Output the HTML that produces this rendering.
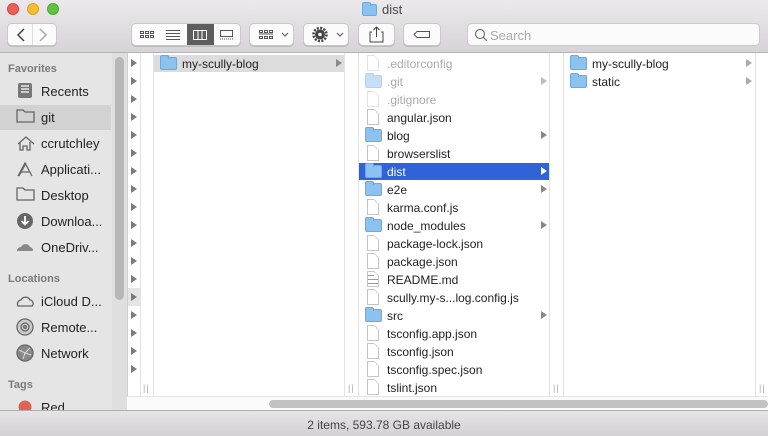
<!DOCTYPE html>
<html><head><meta charset="utf-8"><style>
*{margin:0;padding:0;box-sizing:border-box}
body{width:768px;height:436px;overflow:hidden;font-family:"Liberation Sans",sans-serif;font-size:12px;color:#222;background:#fff;position:relative}
.a{position:absolute}
.tb{left:0;top:0;width:768px;height:53px;background:linear-gradient(#ebe9eb,#d6d4d6);border-bottom:1px solid #b5b3b5}
.btn{position:absolute;top:23px;height:23px;background:#fbfbfb;border:1px solid #c9c7c9;border-radius:5px;box-shadow:0 1px 0 #bdbbbd}
.sb{left:0;top:53px;width:127px;height:358px;background:#e6e5e6}
.sl{position:absolute;left:8px;font-size:11px;color:#7b7a7b;font-weight:bold}
.si{position:absolute;left:41px;font-size:13px;color:#222}
.row{position:absolute;height:18px;line-height:18px;font-size:12px;margin-top:1px}
.fold{position:absolute;width:17px;height:13px;background:#8cc2ef;border:1px solid #6fa9da;border-radius:2px}
.fold:before{content:"";position:absolute;left:-1px;top:-3px;width:7px;height:3px;background:#8cc2ef;border:1px solid #6fa9da;border-bottom:none;border-radius:2px 2px 0 0}
.doc{position:absolute;width:12px;height:16px;border:1px solid #c4c4c4;background:#fff;border-top-right-radius:0}
.doc:after{content:"";position:absolute;right:-1px;top:-1px;width:5px;height:5px;background:linear-gradient(225deg,#fff 50%,#c4c4c4 50%,#c4c4c4 60%,#fff 60%)}
.arr{position:absolute;width:0;height:0;border-left:6px solid #888;border-top:4px solid transparent;border-bottom:4px solid transparent}
.ca{border-left-color:#7a7a7a}
.vl{position:absolute;top:53px;width:1px;height:343px;background:#e3e3e3}
.hd{position:absolute;top:383px;font-size:9px;color:#aaa;letter-spacing:1px}
</style></head><body>
<div class="a tb"></div>
<div class="a" style="left:7px;top:3px;width:12px;height:12px;border-radius:50%;background:#ec5f57;border:1px solid #d44"></div>
<div class="a" style="left:27px;top:3px;width:12px;height:12px;border-radius:50%;background:#f5bd2f;border:1px solid #d9a126"></div>
<div class="a" style="left:47px;top:3px;width:12px;height:12px;border-radius:50%;background:#5fc43f;border:1px solid #4aa830"></div>
<div class="fold" style="left:362px;top:4px;width:15px;height:12px"></div>
<div class="a" style="left:382px;top:2px;font-size:13px;color:#4a4a4a">dist</div>
<div class="btn" style="left:7px;width:50px"></div>
<div class="a" style="left:32px;top:24px;width:1px;height:21px;background:#ddd"></div>
<svg class="a" style="left:14px;top:27px" width="40" height="16"><path d="M10 2 L4 8 L10 14" stroke="#444" stroke-width="1.5" fill="none"/><path d="M26 2 L32 8 L26 14" stroke="#aaa" stroke-width="1.5" fill="none"/></svg>
<div class="btn" style="left:131px;width:110px;overflow:hidden"><div class="a" style="left:55px;top:0;width:27px;height:23px;background:#5d5d5d"></div></div>
<svg class="a" style="left:131px;top:23px" width="110" height="23">
<g fill="none" stroke="#555" stroke-width="1"><rect x="9.5" y="8.5" width="3" height="2"/><rect x="14.5" y="8.5" width="3" height="2"/><rect x="19.5" y="8.5" width="3" height="2"/><rect x="9.5" y="12.5" width="3" height="2"/><rect x="14.5" y="12.5" width="3" height="2"/><rect x="19.5" y="12.5" width="3" height="2"/>
<path d="M35 7.5h14M35 10.5h14M35 13.5h14M35 16.5h14"/>
<rect x="62.5" y="7.5" width="13" height="9" stroke="#fff"/><path d="M67 8v8M71 8v8" stroke="#fff"/>
<rect x="89.5" y="7.5" width="12" height="6"/><path d="M89 16h13" stroke-dasharray="1 1"/></g></svg>
<div class="btn" style="left:249px;width:45px"></div>
<svg class="a" style="left:249px;top:23px" width="45" height="23"><g fill="none" stroke="#555"><rect x="10.5" y="7.5" width="3" height="2"/><rect x="15.5" y="7.5" width="3" height="2"/><rect x="20.5" y="7.5" width="3" height="2"/><rect x="10.5" y="13.5" width="3" height="2"/><rect x="15.5" y="13.5" width="3" height="2"/><rect x="20.5" y="13.5" width="3" height="2"/><path d="M10 11h14"/><path d="M33 10l3 3 3-3"/></g></svg>
<div class="btn" style="left:303px;width:46px"></div>
<svg class="a" style="left:303px;top:23px" width="46" height="23"><circle cx="17" cy="11.5" r="5" fill="#444"/><circle cx="17" cy="11.5" r="6.5" fill="none" stroke="#444" stroke-width="2.5" stroke-dasharray="2 1.4"/><circle cx="17" cy="11.5" r="1.8" fill="#fff"/><path d="M34 10l3 3 3-3" fill="none" stroke="#555"/></svg>
<div class="btn" style="left:358px;width:37px"></div>
<svg class="a" style="left:358px;top:23px" width="37" height="23"><path d="M14 9h-2v10h13v-10h-2M18.5 4v10M15.5 7l3-3 3 3" fill="none" stroke="#444"/></svg>
<div class="btn" style="left:403px;width:38px"></div>
<svg class="a" style="left:403px;top:23px" width="38" height="23"><path d="M14 8.5h12.5v6h-12.5l-3-3z" fill="none" stroke="#555"/></svg>
<div class="btn" style="left:467px;width:293px;box-shadow:none;border-color:#ccc"></div>
<svg class="a" style="left:473px;top:27px" width="16" height="16"><circle cx="7" cy="7" r="4.5" fill="none" stroke="#777" stroke-width="1.2"/><path d="M10.2 10.2l3.5 3.5" stroke="#777" stroke-width="1.3"/></svg>
<div class="a" style="left:490px;top:28px;font-size:13px;color:#aaa">Search</div>

<div class="a sb"></div>
<div class="a" style="left:112px;top:53px;width:15px;height:358px;background:#e0dfe0"></div>
<div class="a" style="left:115px;top:57px;width:9px;height:243px;border-radius:5px;background:#b8b7b8"></div>
<div class="a" style="left:0;top:105px;width:111px;height:25px;background:#d3d2d3"></div>
<div class="sl" style="top:63px">Favorites</div>
<div class="sl" style="top:273px">Locations</div>
<div class="sl" style="top:379px">Tags</div>
<div class="si" style="top:84px">Recents</div>
<div class="si" style="top:110px">git</div>
<div class="si" style="top:136px">ccrutchley</div>
<div class="si" style="top:162px">Applicati...</div>
<div class="si" style="top:188px">Desktop</div>
<div class="si" style="top:214px">Downloa...</div>
<div class="si" style="top:240px">OneDriv...</div>
<div class="si" style="top:294px">iCloud D...</div>
<div class="si" style="top:320px">Remote...</div>
<div class="si" style="top:346px">Network</div>
<div class="si" style="top:400px">Red</div>
<svg class="a" style="left:14px;top:80px" width="24" height="340" fill="none" stroke="#666" stroke-width="1.3">
<rect x="4" y="3" width="14" height="15" rx="2" fill="#777" stroke="none"/><path d="M7 6h8M7 9h8M7 12h8" stroke="#fff"/>
<path d="M3 30h6l2 2h9v10h-17z"/>
<path d="M4 64l8-7 8 7M6 62v8h3v-4h4v4h3v-8" />
<path d="M4 96l7-13 7 13M7 92h9M12 83l-7 13"/>
<path d="M3 108h6l2 2h9v10h-17z"/>
<circle cx="11" cy="141" r="8" fill="#666" stroke="none"/><path d="M11 136v8M7.5 141l3.5 3.5 3.5-3.5" stroke="#fff" stroke-width="1.8"/>
<path d="M3 171a4 4 0 0 1 4-4a5 5 0 0 1 9 0a4 4 0 0 1 3 4z" fill="#888" stroke="none"/>
<path d="M4 226a4 4 0 0 1 3-6a5 5 0 0 1 9 0a3.5 3.5 0 0 1 2 6z"/>
<circle cx="11" cy="247" r="8" fill="#ccc"/><circle cx="11" cy="247" r="4"/><circle cx="11" cy="247" r="1.3"/>
<circle cx="11" cy="273" r="8" fill="#888" stroke="#666"/><path d="M5 270l6 3 5-5M11 273l-2 6M11 273l6 2" stroke="#ddd" stroke-width="1"/>
<circle cx="11" cy="327" r="6.5" fill="#e06453" stroke="none"/>
</svg>

<div class="a" style="left:127px;top:53px;width:1px;height:358px;background:#cfcfcf"></div>
<div class="vl" style="left:140px"></div><div class="vl" style="left:153px"></div>
<div class="vl" style="left:344px"></div><div class="vl" style="left:358px"></div>
<div class="vl" style="left:549px"></div><div class="vl" style="left:563px"></div>
<div class="vl" style="left:755px"></div>
<div class="a" style="left:128px;top:288px;width:12px;height:18px;background:#e4e4e4"></div>
<div class="hd" style="left:143px">||</div><div class="hd" style="left:348px">||</div><div class="hd" style="left:553px">||</div><div class="hd" style="left:759px">||</div>

<div class="arr ca" style="left:131px;top:59px"></div><div class="arr ca" style="left:131px;top:77px"></div><div class="arr ca" style="left:131px;top:95px"></div><div class="arr ca" style="left:131px;top:113px"></div><div class="arr ca" style="left:131px;top:131px"></div><div class="arr ca" style="left:131px;top:149px"></div><div class="arr ca" style="left:131px;top:167px"></div><div class="arr ca" style="left:131px;top:185px"></div><div class="arr ca" style="left:131px;top:203px"></div><div class="arr ca" style="left:131px;top:221px"></div><div class="arr ca" style="left:131px;top:239px"></div><div class="arr ca" style="left:131px;top:257px"></div><div class="arr ca" style="left:131px;top:275px"></div><div class="arr ca" style="left:131px;top:293px"></div><div class="arr ca" style="left:131px;top:311px"></div><div class="arr ca" style="left:131px;top:329px"></div><div class="arr ca" style="left:131px;top:347px"></div><div class="arr ca" style="left:131px;top:365px"></div>

<div class="a" style="left:154px;top:55px;width:190px;height:17px;background:#dcdcdc"></div>
<div class="fold" style="left:160px;top:57px"></div>
<div class="row" style="left:182px;top:54px">my-scully-blog</div>
<div class="arr" style="left:336px;top:59px"></div>

<div class="a" style="left:359px;top:163px;width:190px;height:17px;background:#2f63d7"></div>
<div class="doc" style="left:367px;top:55px;opacity:.5"></div><div class="row" style="left:387px;top:54px;color:#aaa">.editorconfig</div>
<div class="fold" style="left:365px;top:75px;opacity:.5"></div><div class="row" style="left:387px;top:72px;color:#aaa">.git</div><div class="arr" style="left:541px;top:77px;border-left-color:#bbb"></div>
<div class="doc" style="left:367px;top:91px;opacity:.5"></div><div class="row" style="left:387px;top:90px;color:#aaa">.gitignore</div>
<div class="doc" style="left:367px;top:109px"></div><div class="row" style="left:387px;top:108px">angular.json</div>
<div class="fold" style="left:365px;top:129px"></div><div class="row" style="left:387px;top:126px">blog</div><div class="arr" style="left:541px;top:131px"></div>
<div class="doc" style="left:367px;top:145px"></div><div class="row" style="left:387px;top:144px">browserslist</div>
<div class="fold" style="left:365px;top:165px"></div><div class="row" style="left:387px;top:162px;color:#fff">dist</div><div class="arr" style="left:541px;top:167px;border-left-color:#fff"></div>
<div class="fold" style="left:365px;top:183px"></div><div class="row" style="left:387px;top:180px">e2e</div><div class="arr" style="left:541px;top:185px"></div>
<div class="doc" style="left:367px;top:199px"></div><div class="row" style="left:387px;top:198px">karma.conf.js</div>
<div class="fold" style="left:365px;top:219px"></div><div class="row" style="left:387px;top:216px">node_modules</div><div class="arr" style="left:541px;top:221px"></div>
<div class="doc" style="left:367px;top:235px"></div><div class="row" style="left:387px;top:234px">package-lock.json</div>
<div class="doc" style="left:367px;top:253px"></div><div class="row" style="left:387px;top:252px">package.json</div>
<div class="doc" style="left:367px;top:271px;background:repeating-linear-gradient(#fff 0 3px,#99a 3px 4px)"></div><div class="row" style="left:387px;top:270px">README.md</div>
<div class="doc" style="left:367px;top:289px"></div><div class="row" style="left:387px;top:288px">scully.my-s...log.config.js</div>
<div class="fold" style="left:365px;top:309px"></div><div class="row" style="left:387px;top:306px">src</div><div class="arr" style="left:541px;top:311px"></div>
<div class="doc" style="left:367px;top:325px"></div><div class="row" style="left:387px;top:324px">tsconfig.app.json</div>
<div class="doc" style="left:367px;top:343px"></div><div class="row" style="left:387px;top:342px">tsconfig.json</div>
<div class="doc" style="left:367px;top:361px"></div><div class="row" style="left:387px;top:360px">tsconfig.spec.json</div>
<div class="doc" style="left:367px;top:379px"></div><div class="row" style="left:387px;top:378px">tslint.json</div>

<div class="fold" style="left:570px;top:57px"></div><div class="row" style="left:592px;top:54px">my-scully-blog</div><div class="arr" style="left:746px;top:59px;border-left-color:#aaa"></div>
<div class="fold" style="left:570px;top:75px"></div><div class="row" style="left:592px;top:72px">static</div><div class="arr" style="left:746px;top:77px;border-left-color:#aaa"></div>

<div class="a" style="left:127px;top:396px;width:641px;height:1px;background:#e3e3e3"></div>
<div class="a" style="left:127px;top:397px;width:641px;height:14px;background:#fafafa"></div>
<div class="a" style="left:269px;top:400px;width:499px;height:8px;border-radius:4px;background:#c2c2c2"></div>
<div class="a" style="left:0;top:410px;width:768px;height:26px;background:linear-gradient(#e6e4e6,#d3d1d3);border-top:1px solid #b0aeb0"></div>
<div class="a" style="left:0;top:418px;width:768px;text-align:center;font-size:12px;color:#444">2 items, 593.78 GB available</div>
</body></html>
